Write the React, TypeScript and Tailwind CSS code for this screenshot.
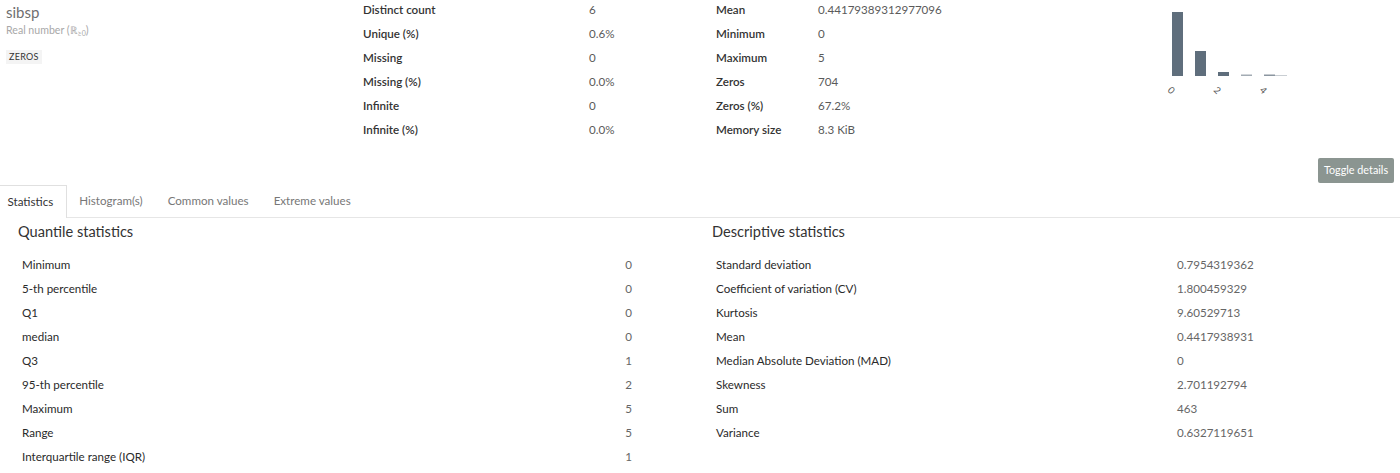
const overview = [
  ["Distinct count", "6"],
  ["Unique (%)", "0.6%"],
  ["Missing", "0"],
  ["Missing (%)", "0.0%"],
  ["Infinite", "0"],
  ["Infinite (%)", "0.0%"],
];

const summary = [
  ["Mean", "0.44179389312977096"],
  ["Minimum", "0"],
  ["Maximum", "5"],
  ["Zeros", "704"],
  ["Zeros (%)", "67.2%"],
  ["Memory size", "8.3 KiB"],
];

const quantiles = [
  ["Minimum", "0"],
  ["5-th percentile", "0"],
  ["Q1", "0"],
  ["median", "0"],
  ["Q3", "1"],
  ["95-th percentile", "2"],
  ["Maximum", "5"],
  ["Range", "5"],
  ["Interquartile range (IQR)", "1"],
];

const descriptive = [
  ["Standard deviation", "0.7954319362"],
  ["Coefficient of variation (CV)", "1.800459329"],
  ["Kurtosis", "9.60529713"],
  ["Mean", "0.4417938931"],
  ["Median Absolute Deviation (MAD)", "0"],
  ["Skewness", "2.701192794"],
  ["Sum", "463"],
  ["Variance", "0.6327119651"],
];

const tabs = ["Statistics", "Histogram(s)", "Common values", "Extreme values"];

function MiniHistogram() {
  return (
    <svg width="140" height="100" viewBox="0 0 140 100" className="mt-[2px] shrink-0">
      <rect x="12" y="12" width="11" height="64" fill="#5f6e7c" />
      <rect x="35" y="51" width="11" height="25" fill="#5f6e7c" />
      <rect x="58" y="72" width="11" height="4" fill="#5f6e7c" />
      <rect x="81" y="74.5" width="11" height="1.5" fill="#a3acb4" />
      <rect x="104" y="74.5" width="11" height="1.5" fill="#8b96a0" />
      <rect x="115" y="75" width="12" height="1" fill="#c9ced3" />
      <g fill="#555" fontSize="9.5" fontFamily="Lato, sans-serif">
        <text x="9" y="94" transform="rotate(45 12 90)">0</text>
        <text x="55" y="94" transform="rotate(45 58 90)">2</text>
        <text x="101" y="94" transform="rotate(45 104 90)">4</text>
      </g>
    </svg>
  );
}

export default function App() {
  return (
    <div className="w-[1400px] h-[473px] overflow-hidden bg-white font-['Lato','Open_Sans',sans-serif] text-[11.6px] text-[#333]">
      <div className="flex mt-[-2px]">
        <div className="w-[357px] pl-[6px] pt-[4px] shrink-0">
          <div className="text-[15px] leading-[20px] text-[#6f6f6f]">sibsp</div>
          <div className="mt-[1px] text-[10.6px] leading-[14px] text-[#a8a8a8]">
            Real number (ℝ<sub className="text-[7px]">≥0</sub>)
          </div>
          <span className="mt-[13px] inline-block bg-[#f4f4f4] px-[3px] text-[9px] leading-[14px] text-[#333] tracking-[0.3px]">
            ZEROS
          </span>
        </div>
        <div className="w-[353px] shrink-0">
          {overview.map(([k, v]) => (
            <div key={k} className="flex h-[24px] items-center">
              <span className="w-[232px] pl-[6px] font-semibold text-[#333]">{k}</span>
              <span className="text-[#5a5a5a]">{v}</span>
            </div>
          ))}
        </div>
        <div className="w-[450px] shrink-0">
          {summary.map(([k, v]) => (
            <div key={k} className="flex h-[24px] items-center">
              <span className="w-[108px] pl-[6px] font-semibold text-[#333]">{k}</span>
              <span className="text-[#5a5a5a]">{v}</span>
            </div>
          ))}
        </div>
        <MiniHistogram />
      </div>

      <div className="flex justify-end pr-[6px] pt-[16px]">
        <button className="h-[25px] w-[76px] rounded-[2px] bg-[#8b9591] text-[10.8px] text-white">
          Toggle details
        </button>
      </div>

      <div className="mt-[2px] flex border-b border-[#e6e6e6] ml-[-6px] h-[33px]">
        {tabs.map((t, i) => (
          <div
            key={t}
            className={
              i === 0
                ? "px-[12.5px] flex items-center border border-b-0 border-[#e0e0e0] bg-white -mb-px text-[#333]"
                : "px-[12.5px] flex items-center text-[#777]"
            }
          >
            {t}
          </div>
        ))}
      </div>

      <div className="grid grid-cols-[694px_1fr] pl-[18px] pt-[4px]">
        <div>
          <h4 className="text-[14.6px] leading-[20px] text-[#333]">Quantile statistics</h4>
          <div className="mt-[11px] w-[618px]">
            {quantiles.map(([k, v]) => (
              <div key={k} className="flex h-[24px] items-center justify-between px-[4px]">
                <span className="text-[#2a2a2a]">{k}</span>
                <span className="text-[#666]">{v}</span>
              </div>
            ))}
          </div>
        </div>
        <div>
          <h4 className="text-[14.6px] leading-[20px] text-[#333]">Descriptive statistics</h4>
          <div className="mt-[11px]">
            {descriptive.map(([k, v]) => (
              <div key={k} className="flex h-[24px] items-center px-[4px]">
                <span className="w-[461px] text-[#2a2a2a]">{k}</span>
                <span className="text-[#666]">{v}</span>
              </div>
            ))}
          </div>
        </div>
      </div>
    </div>
  );
}
